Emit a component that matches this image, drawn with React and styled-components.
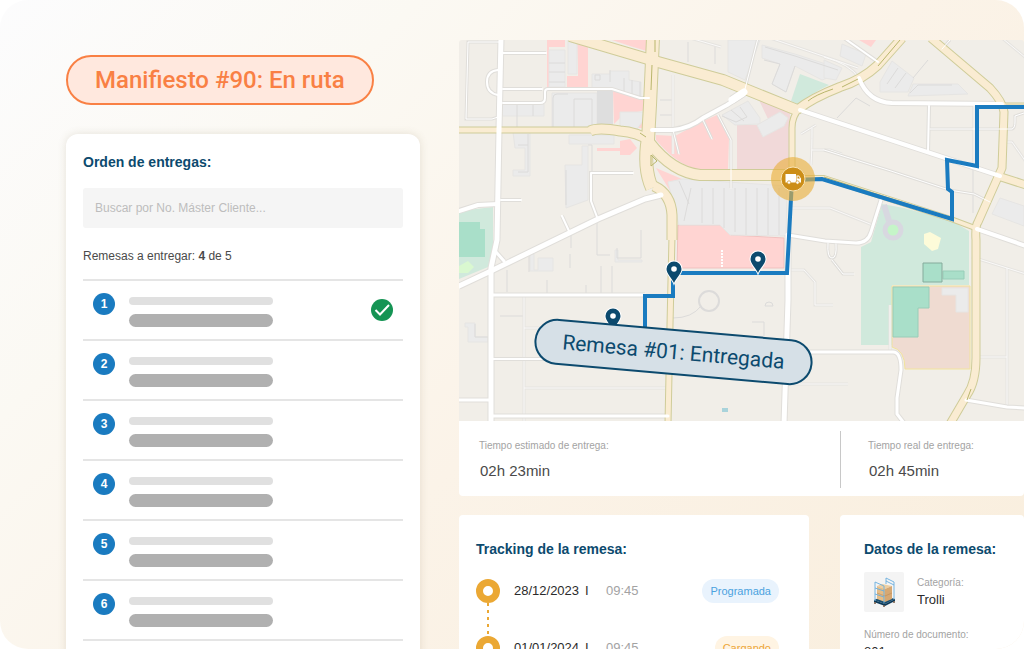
import styled, { createGlobalStyle } from 'styled-components'

const GlobalStyle = createGlobalStyle`
  *, *::before, *::after { box-sizing: border-box; }
  body {
    margin: 0;
    background: #fff;
    color: #3c3c3c;
    font-family: "Liberation Sans", Arial, sans-serif;
  }
  h1, h2, p, ol, dl, dd { margin: 0; padding: 0; }
`

const Stage = styled.main`
  display: grid;
  grid-template-columns: 354px minmax(0, 1fr);
  column-gap: 39px;
  height: 100vh;
  padding-left: 66px;
  overflow: hidden;
  border-radius: 28px;
  background: linear-gradient(135deg, #fcfcfd 0%, #fbf9f3 25%, #fbf3e8 55%, #f9eedd 100%);
`

const OrdersColumn = styled.section`
  display: flex;
  flex-direction: column;
  gap: 29px;
  padding-top: 55px;
`

const DetailColumn = styled.section`
  padding-top: 40px;
`

const Pill = styled.h1`
  align-self: flex-start;
  padding: 0 27px;
  border: 2px solid #f98044;
  border-radius: 25px;
  background: #ffe8de;
  color: #f98044;
  font-family: Roboto, sans-serif;
  font-size: 24px;
  font-weight: 500;
  line-height: 46px;
  white-space: nowrap;
`

const Panel = styled.div`
  flex: 1 0 auto;
  padding: 18px 17px;
  border-radius: 12px;
  background: #fff;
  box-shadow: 0 0 8px rgba(120, 100, 60, 0.16);
`

const Heading = styled.h2`
  color: #0c4a6e;
  font-size: 14px;
  font-weight: 700;
  line-height: 20px;
`

const Search = styled.input`
  display: block;
  width: 100%;
  height: 40px;
  margin-top: 16px;
  padding: 0 12px;
  border: 0;
  border-radius: 3px;
  background: #f5f5f5;
  font-family: inherit;
  font-size: 12px;

  &::placeholder {
    color: #bdbdbd;
    opacity: 1;
  }
`

const Remaining = styled.p`
  margin: 18px 0 13px;
  color: #4a4a4a;
  font-size: 12px;
  line-height: 20px;
`

const OrderList = styled.ol`
  border-bottom: 2px solid #e5e5e5;
  list-style: none;
`

const OrderRow = styled.li`
  display: flex;
  align-items: flex-start;
  height: 60px;
  padding: 12px 10px;
  border-top: 2px solid #e5e5e5;
`

const OrderNumber = styled.span`
  width: 22px;
  height: 22px;
  margin-right: 14px;
  border-radius: 50%;
  background: #1a7bc0;
  color: #fff;
  font-size: 12px;
  font-weight: 700;
  line-height: 22px;
  text-align: center;
`

const Bars = styled.div`
  display: flex;
  flex-direction: column;
  gap: 9px;
  width: 144px;
  margin-right: auto;
  padding-top: 4px;
`

const Bar = styled.span`
  height: ${(props) => (props.$dark ? 13 : 8)}px;
  border-radius: 7px;
  background: ${(props) => (props.$dark ? '#b0b0b0' : '#e0e0e0')};
`

const Check = styled.svg`
  width: 22px;
  height: 22px;
  margin-top: 6px;
`

const MapArea = styled.div`
  position: relative;
  height: 381px;
  overflow: hidden;
  border-radius: 3px 3px 0 0;
`

const MapSvg = styled.svg`
  display: block;
  width: 100%;
  height: 100%;
`

const MapLabel = styled.div`
  position: absolute;
  left: 75px;
  top: 289px;
  width: 279px;
  border: 2px solid #0c4a6e;
  border-radius: 23px;
  background: #d6e0e7;
  color: #0c4a6e;
  font-family: Roboto, sans-serif;
  font-size: 21px;
  line-height: 42px;
  text-align: center;
  white-space: nowrap;
  transform: rotate(5deg);
`

const Times = styled.dl`
  display: grid;
  grid-template-columns: 381px minmax(0, 1fr);
  height: 75px;
  padding: 10px 0 8px;
  border-radius: 0 0 4px 4px;
  background: #fff;
`

const Time = styled.div`
  padding: 5px 0 0 ${(props) => (props.$divided ? 27 : 20)}px;
  border-left: ${(props) => (props.$divided ? '1px solid #c8c8c8' : '0')};
`

const Label = styled.dt`
  color: #a3a3a3;
  font-size: 10px;
  line-height: 20px;
  white-space: nowrap;
`

const TimeValue = styled.dd`
  padding: 5px 1px 0;
  color: #4a4a4a;
  font-size: 15px;
  line-height: 20px;
`

const Cards = styled.div`
  display: grid;
  grid-template-columns: 350px minmax(184px, 1fr);
  gap: 31px;
  margin-top: 19px;
`

const Card = styled.section`
  min-height: 320px;
  padding: 24px ${(props) => (props.$wide ? '30px 24px 17px' : '24px')};
  border-radius: 4px;
  background: #fff;
  white-space: nowrap;
`

const TrackList = styled.ol`
  margin-top: 20px;
  list-style: none;
`

const TrackRow = styled.li`
  display: grid;
  grid-template-columns: 24px 73px 20px 1fr auto;
  align-items: start;
  height: 57px;
  font-size: 13px;
  line-height: 24px;
`

const Marker = styled.span`
  display: flex;
  flex-direction: column;
  align-items: center;
  height: 57px;

  &::before {
    content: "";
    flex: none;
    width: 24px;
    height: 24px;
    border: 7px solid #eba834;
    border-radius: 50%;
  }

  &::after {
    content: "";
    flex: 1;
    width: 2px;
    background: repeating-linear-gradient(#eba834 0 3px, transparent 3px 7px);
  }
`

const TrackDate = styled.span`
  padding-left: 14px;
  color: #2b2b2b;
`

const Separator = styled.span`
  padding-left: 12px;
  color: #2b2b2b;
`

const TrackTime = styled.span`
  padding-left: 13px;
  color: #a3a3a3;
`

const Badge = styled.span`
  padding: 0 8px;
  border-radius: 12px;
  background: ${(props) => (props.$tone === 'blue' ? '#e9f3fd' : '#fff4e3')};
  color: ${(props) => (props.$tone === 'blue' ? '#4ba2df' : '#eda637')};
  font-size: 11px;
`

const Product = styled.div`
  display: flex;
  gap: 13px;
  margin: 13px 0 12px;
`

const Thumb = styled.svg`
  flex: none;
  width: 40px;
  height: 40px;
  border-radius: 2px;
  background: #f4f4f4;
`

const Fact = styled.dl`
  dt { line-height: 22px; }
  dd {
    color: #2b2b2b;
    font-size: 13px;
    line-height: 12px;
  }
`

const orders = [
  { id: 1, delivered: true },
  { id: 2 },
  { id: 3 },
  { id: 4 },
  { id: 5 },
  { id: 6 },
]

const tracking = [
  { date: '28/12/2023', time: '09:45', status: 'Programada', tone: 'blue' },
  { date: '01/01/2024', time: '09:45', status: 'Cargando', tone: 'amber' },
]

const avenues = [
  { d: 'M459 130H592', w: 5 },
  { d: 'M590 131Q598 127 620 131Q637 132 650 141', w: 9 },
  { d: 'M931 38L990 88Q1003 102 1004 112L1002 168L978 222Q975 226 976 240V358Q976 382 967 395L950 424', w: 7 },
  { d: 'M1001 177L1026 185', w: 7 },
  { d: 'M1002 104H1026', w: 1 },
  { d: 'M570 36L658 62L723 80L797 110', w: 10 },
  { d: 'M797 110Q812 98 840 87Q862 80 878 65L902 38', w: 8 },
  { d: 'M800 108Q792 116 792 128V174', w: 5 },
  { d: 'M653 38L650 105L648 140', w: 12 },
  { d: 'M648 138Q643 168 652 188', w: 12 },
  { d: 'M649 142Q672 172 700 175H792', w: 10 },
  { d: 'M792 178L824 178L951 219L975 228', w: 4 },
  { d: 'M654 186Q671 194 672 215V240', w: 9 },
  { d: 'M672 236L670 325L668 424', w: 5 },
]

const streets = [
  { d: 'M501 38L499 130L497 240L491 268V424', w: 5 },
  { d: 'M459 211L478 205L498 204', w: 4 },
  { d: 'M459 286L491 271L598 219L645 199L661 195', w: 5 },
  { d: 'M496 252L504 261', w: 3 },
  { d: 'M493 295H645', w: 3 },
  { d: 'M493 359H640', w: 2 },
  { d: 'M493 416H668', w: 3 },
  { d: 'M459 400H491', w: 3 },
  { d: 'M503 53H546M503 89H542M503 103H540Q545 103 545 98V92Q545 89 548 89H612L640 98H649', w: 2 },
  { d: 'M500 42H468L466 119H492L498 117', w: 1 },
  { d: 'M498 70Q487 71 487 82T498 95', w: 2 },
  { d: 'M501 200H521M633 173H591V201L597 217M562 216L569 231', w: 2 },
  { d: 'M652 130H673Q690 128 703 118L727 105L744 94', w: 4 },
  { d: 'M732 100L744 92', w: 7 },
  { d: 'M744 93L758 38', w: 1 },
  { d: 'M673 130L679 154M703 120L712 139M718 115L731 140V188', w: 1 },
  { d: 'M800 110L824 118L1000 176', w: 4 },
  { d: 'M859 78Q868 102 892 103L1002 104', w: 4 },
  { d: 'M844 38L878 62', w: 2 },
  { d: 'M929 106L928 152', w: 2 },
  { d: 'M930 129H1012Q1015 128 1015 122V116L1024 113M974 106V164M942 49L950 40', w: 1 },
  { d: 'M824 150L891 171L949 190L974 194L990 202', w: 1 },
  { d: 'M977 229L1026 246', w: 4 },
  { d: 'M881 200L871 232Q868 243 856 243L825 241L788 235', w: 3 },
  { d: 'M828 243Q827 258 832 258T836 244M832 260L843 274H854', w: 1 },
  { d: 'M788 235V300L784 424', w: 5 },
  { d: 'M787 352H893Q901 352 901 370L897 398V414L904 423', w: 3 },
  { d: 'M966 400L1007 407L1026 408', w: 3 },
]

const lanes = [
  'M524 388H668M524 297V421M524 328H545M787 384H848',
  'M972 257L1026 274M1007 268V406M972 357H1007M890 305V350',
  'M812 128Q812 150 811 165M801 134L816 125M812 150H830L842 154M791 208L830 208L875 226',
  'M1002 142H1012L1026 162M790 270H804L815 282V305H833',
  'M770 38L858 68M690 38L721 47M824 57Q850 64 859 78',
  'M1002 38L1026 58M673 75V154',
]

const buildings = [
  'M549 50H565V87H549Z',
  'M568 40H577V74H568Z',
  'M592 74H610V71H629V80L641 82V96L612 90H592Z',
  'M502 104H544V116H502Z',
  'M552 93H597V128H552Z',
  'M513 132H530V176H513V170H525V148H515Z',
  'M565 165H582V146H588V200L566 208Z',
  'M569 135H614V144H569Z',
  'M620 112H645V118L637 129H620Z',
  'M722 115L748 101L760 118V124L735 125Z',
  'M757 125L780 112L788 118L784 126L763 137Z',
  'M728 40H760L745 80L728 72Z',
  'M762 45L795 54L838 68V74L822 80L795 66L786 92L772 84L780 64L762 58Z',
  'M668 182L683 179L787 186L786 236L730 235L720 225H679Z',
  'M880 82L892 61L914 78L908 92H880Z',
  'M913 84H958L968 94L908 96Z',
  'M824 60L842 68L836 80L824 78Z',
  'M842 44L866 54L862 66L840 56Z',
  'M538 258H553V271H530V254H534V270H538Z',
  'M942 288H968V312H956V295H942Z',
  'M1000 198L1024 206V226L992 214Z',
  'M615 250H618V260H642V262H615Z',
  'M465 323H475V337H488V342H468V327H465Z',
]

const blockLines = [
  'M549 63H565M549 72H565M549 82H565',
  'M553 128V98Q553 94 557 94H568M574 129V99H592V128',
  'M610 70V82M624 78V92M632 80V95M640 82V97',
  'M528 134V172H518M518 145H528M566 170V205M592 201V145H588',
  'M517 105V129M533 105V116',
  'M691 188L684 221M702 188V223M713 188V224M724 188V228M735 188V232M746 188V235M757 188V235M768 188V235M779 188V235',
  'M679 181L689 204M722 116L736 122L747 117L740 107M731 110L744 121',
  'M765 47L795 56L838 70M764 60L780 64L772 84L786 92L795 66',
  'M887 84L898 68M895 88L906 73M913 78L928 60M910 93L918 85H952',
  'M507 270V292M547 280V294M586 285V294M601 266V293M612 266V293M641 230V258H617V248',
  'M529 256V272M570 254V268M500 316H523M475 324V337H488M571 230V248M597 219V255H610',
  'M688 42V62M715 45V64M660 100H672M660 115H672',
  'M837 118L856 98L870 106M973 164V213',
  'M673 318Q692 318 701 306M752 322H764V337',
]

const pins = [
  [613, 330],
  [674, 283],
  [758, 273],
]

const StreetMap = () => (
  <MapSvg viewBox="459 40 565 381" preserveAspectRatio="xMinYMin slice" role="img" aria-label="Mapa de la ruta">
    <rect x="459" y="40" width="565" height="381" fill="#f1eee8" />

    <g fill="#d0e9dc">
      <path d="M459 211L493 207V252L488 267L459 279Z" />
      <path d="M800 74L829 85Q810 94 799 105L791 101Z" />
      <path d="M861 247L871 242L882 204L904 208L952 221L969 231V285H892V345H861Z" />
    </g>
    <path d="M459 222H480V229H485V257H459Z" fill="#a9dfc9" />
    <path d="M459 266L468 261L474 267L468 273H459Z" fill="#d9f8d0" />

    <path d="M892 286H970V369H905Q905 350 892 347Z" fill="#efdbd1" stroke="#f2e39c" />
    <g fill="#a9dfc9" stroke="#98cdb8">
      <path d="M893 287H929V308H918V337H893Z" />
      <path d="M943 271H964V279H943Z" />
      <path d="M923 263H942V282H923Z" stroke="#86ab9c" />
    </g>
    <path d="M924 234L930 232L941 238L938 249L932 251L924 244Z" fill="#fdfbd9" />

    <g fill="#ffd4d2">
      <path d="M547 40H565V47H549V88H547Z" />
      <path d="M577 40L588 45V87H567V76H578V66Z" />
      <path d="M613 91L645 99V128H638L645 118V110L622 116L614 124Z" />
      <path d="M620 141L630 139L637 148L630 155H620Z M597 148H620V151H597Z" />
      <path d="M612 40H650V52L630 46Z" />
      <path d="M656 135L675 136L703 121L717 115L729 138L728 169H700Q680 168 656 140Z" />
      <path d="M656 168L682 179L668 182L672 194Z" />
      <path d="M678 225H721L731 235L784 238V268H677Z" stroke="#f0c1bf" />
      <path d="M859 40H876L871 47Z" />
    </g>
    <path d="M737 125H757L768 119L758 98L790 111V171H737Z" fill="#f1d9d9" />

    <g fill="#ebebeb" stroke="#e6e5e3">
      {buildings.map((d) => <path key={d} d={d} />)}
    </g>
    <path d="M597 91H613V126H597Z" fill="#dedede" />
    <g fill="none" stroke="#dcdbda">
      {blockLines.map((d) => <path key={d} d={d} />)}
      <circle cx="709" cy="301" r="10" strokeWidth="2" />
      <path d="M765 306A4 4 0 0 1 773 306ZM595 75H600V80H595Z" />
    </g>

    <g fill="none" stroke="#e6e4e0" strokeWidth="3">
      {lanes.map((d) => <path key={d} d={d} />)}
    </g>
    <g fill="none" stroke="#faf9f8">
      {lanes.map((d) => <path key={d} d={d} />)}
    </g>
    <g fill="none" stroke="#e0deda">
      {streets.map(({ d, w }) => <path key={d} d={d} strokeWidth={w + 2} />)}
    </g>
    <g fill="none" stroke="#cfcc99" strokeLinejoin="round">
      {avenues.map(({ d, w }) => <path key={d} d={d} strokeWidth={w + 2} />)}
    </g>
    <g fill="none" stroke="#faecd2" strokeLinejoin="round">
      {avenues.map(({ d, w }) => <path key={d} d={d} strokeWidth={w} />)}
    </g>
    <g fill="none" stroke="#fff" strokeLinecap="round" strokeLinejoin="round">
      {streets.map(({ d, w }) => <path key={d} d={d} strokeWidth={w} />)}
    </g>
    <g fill="none" stroke="#b9b66c">
      <path d="M652 65L651 90M655 40V52M878 66L900 40M858 79L842 87M808 101Q815 95 833 89" />
      <path d="M651 155V166L657 161ZM967 400L971 389M640 133L646 137" />
      <path d="M824 177L951 218" />
    </g>

    <circle cx="893" cy="230" r="8" fill="#c5f5c8" stroke="#d8d8e0" strokeWidth="5" />
    <path d="M884 205L889 221" stroke="#d8d8e0" strokeWidth="6" />
    <path d="M722 250V268" stroke="#fff" strokeWidth="2" strokeDasharray="2 1" />
    <rect x="722" y="408" width="6" height="4" fill="#a9d3db" />

    <path
      d="M645 332V296H673V273H787L792 180L822 179L952 219V192L948 189L947 160L977 166V107H1026"
      fill="none"
      stroke="#1a7bc0"
      strokeWidth="4"
    />

    {pins.map(([x, y]) => (
      <g key={x} transform={`translate(${x} ${y})`}>
        <path
          d="M0 0C-2 -5 -7.500 -9 -7.500 -14A7.500 7.500 0 0 1 7.500 -14C7.500 -9 2 -5 0 0Z"
          fill="#0c4a6e"
          stroke="#fff"
          strokeWidth="2"
          paintOrder="stroke"
        />
        <circle cx="0" cy="-14" r="2.800" fill="#fff" />
      </g>
    ))}

    <g transform="translate(793 179)">
      <circle r="22" fill="#e8ae3c" fillOpacity="0.62" />
      <circle r="12" fill="#cc8e18" stroke="#f8e3b4" />
      <path d="M-7.500 -5H3V3.500H-7.500ZM3.500 -3.500H6L8 -0.500V3.500H3.500Z" fill="#fff" />
      <path d="M4.500 -2.500H5.700L7 -0.500H4.500Z" fill="#cc8e18" />
      <circle cx="-4" cy="3.500" r="1.700" fill="#fff" stroke="#cc8e18" strokeWidth="0.700" />
      <circle cx="4.500" cy="3.500" r="1.700" fill="#fff" stroke="#cc8e18" strokeWidth="0.700" />
    </g>
  </MapSvg>
)

const TrolleyPicture = () => (
  <Thumb viewBox="0 0 40 40" role="img" aria-label="Trolli">
    <path d="M10 28L20 24L31 27L21 32Z" fill="#174e72" />
    <path d="M10 28V30L21 34V32ZM21 32V34L31 29V27Z" fill="#0d3a59" />
    <path d="M13 14L18 12L28 14L21 17Z" fill="#edcfa2" />
    <path d="M13 14L21 17V30L13 27Z" fill="#e6bd87" />
    <path d="M21 17L28 14V27L21 30Z" fill="#d6a873" />
    <path d="M13 21L21 24L28 21" fill="none" stroke="#b88551" strokeWidth="0.500" />
    <path d="M11 29V10L20 14V31M11 16L20 19M11 22L20 25M22 12V6L30 10V27M22 9L30 13" fill="none" stroke="#6aaede" strokeWidth="0.900" />
    <path d="M11 30V32M20 33V35M30 29V31" stroke="#755844" strokeWidth="1.500" />
  </Thumb>
)

const Order = ({ id, delivered }) => (
  <OrderRow>
    <OrderNumber>{id}</OrderNumber>
    <Bars>
      <Bar />
      <Bar $dark />
    </Bars>
    {delivered && (
      <Check viewBox="0 0 22 22" role="img" aria-label="Entregada">
        <circle cx="11" cy="11" r="11" fill="#159454" />
        <path d="M4.500 11L9 15.500L18 6" fill="none" stroke="#fff" strokeWidth="2" />
      </Check>
    )}
  </OrderRow>
)

const App = () => {
  return (
    <>
      <GlobalStyle />
      <Stage>
        <OrdersColumn>
          <Pill>Manifiesto #90: En ruta</Pill>
          <Panel>
            <Heading>Orden de entregas:</Heading>
            <Search
              type="search"
              aria-label="Buscar por No. Máster Cliente"
              placeholder="Buscar por No. Máster Cliente..."
            />
            <Remaining>Remesas a entregar: <b>4</b> de 5</Remaining>
            <OrderList>
              {orders.map((order) => <Order key={order.id} {...order} />)}
            </OrderList>
          </Panel>
        </OrdersColumn>

        <DetailColumn>
          <MapArea>
            <StreetMap />
            <MapLabel>Remesa #01: Entregada</MapLabel>
          </MapArea>
          <Times>
            <Time>
              <Label>Tiempo estimado de entrega:</Label>
              <TimeValue>02h 23min</TimeValue>
            </Time>
            <Time $divided>
              <Label>Tiempo real de entrega:</Label>
              <TimeValue>02h 45min</TimeValue>
            </Time>
          </Times>

          <Cards>
            <Card $wide>
              <Heading>Tracking de la remesa:</Heading>
              <TrackList>
                {tracking.map((step) => (
                  <TrackRow key={step.status}>
                    <Marker />
                    <TrackDate>{step.date}</TrackDate>
                    <Separator>I</Separator>
                    <TrackTime>{step.time}</TrackTime>
                    <Badge $tone={step.tone}>{step.status}</Badge>
                  </TrackRow>
                ))}
              </TrackList>
            </Card>
            <Card>
              <Heading>Datos de la remesa:</Heading>
              <Product>
                <TrolleyPicture />
                <Fact>
                  <Label>Categoría:</Label>
                  <dd>Trolli</dd>
                </Fact>
              </Product>
              <Fact>
                <Label>Número de documento:</Label>
                <dd>801</dd>
              </Fact>
            </Card>
          </Cards>
        </DetailColumn>
      </Stage>
    </>
  )
}

export default App
